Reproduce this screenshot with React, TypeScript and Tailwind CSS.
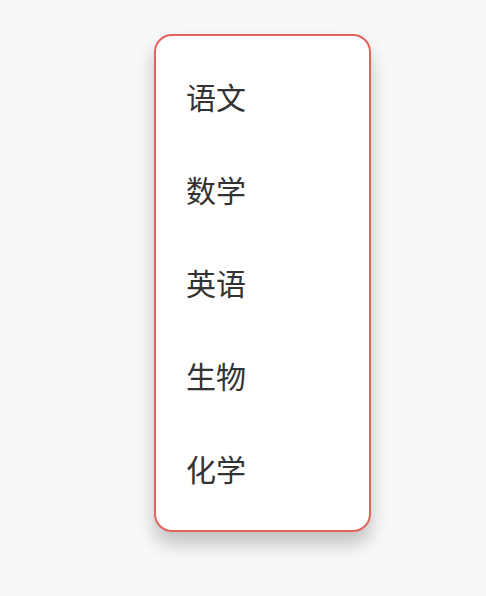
const subjects = ["语文", "数学", "英语", "生物", "化学"];

export default function App() {
  return (
    <div className="min-h-[596px] w-full bg-[#f8f8f8] pt-[34px] font-['Noto_Sans_CJK_SC',sans-serif]">
      <div className="ml-[154px] flex w-[217px] flex-col rounded-[18px] border-2 border-[#e0645a] bg-white pt-[13px] pb-[16px] shadow-[0_12px_18px_rgba(0,0,0,0.22)]">
        {subjects.map((s) => (
          <div
            key={s}
            className="flex h-[93px] items-center pl-[30px] text-[30px] leading-none text-[#333333]"
          >
            {s}
          </div>
        ))}
      </div>
    </div>
  );
}
